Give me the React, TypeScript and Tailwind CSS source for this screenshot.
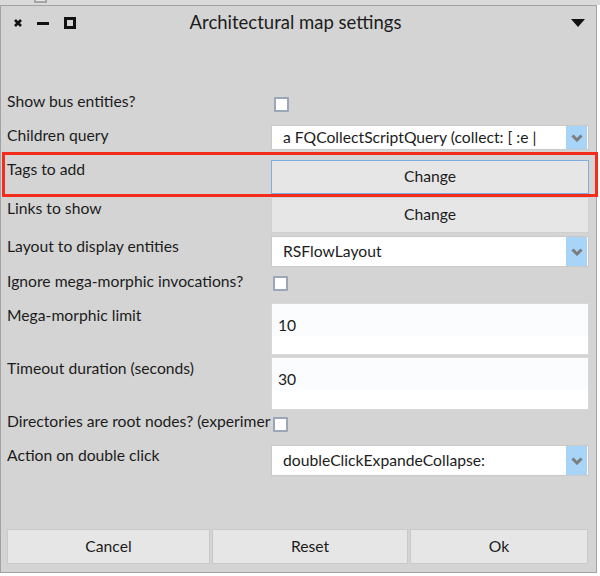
import React from 'react';

const FONT = { fontFamily: 'Lato, "Open Sans", sans-serif' };

function Chevron() {
  return (
    <svg width="12" height="8" viewBox="0 0 12 8">
      <polyline points="1.5,1.5 6,6 10.5,1.5" fill="none" stroke="#7d7d7d" strokeWidth="3" strokeLinejoin="miter" />
    </svg>
  );
}

function Dropdown({ text, h }: { text: string; h: string }) {
  return (
    <div className={`flex w-[318px] border border-[#c9c9c9] bg-white ${h}`}>
      <div className="flex-1 flex items-center pl-[11px] overflow-hidden whitespace-nowrap text-[15.7px] text-[#1c1c1c]">{text}</div>
      <div className="w-[21px] bg-[#a8d4f8] flex items-center justify-center">
        <Chevron />
      </div>
      <div className="w-[1px]" />
    </div>
  );
}

function Checkbox() {
  return <div className="w-[15px] h-[15px] border-2 border-[#9ba7b8] bg-white rounded-[1px]" />;
}

function ChangeButton({ h, focused }: { h: string; focused?: boolean }) {
  return (
    <div
      className={`w-[318px] ${h} flex items-center justify-center bg-[#e6e6e6] border text-[15.7px] text-[#1c1c1c] ${
        focused ? 'border-[#7eaee0]' : 'border-[#d0d0d0]'
      }`}
    >
      Change
    </div>
  );
}

function NumberBox({ value, h }: { value: string; h: string }) {
  return (
    <div className={`w-[318px] ${h} bg-white border border-[#d8d8d8] flex flex-col`}>
      <div className="h-[32px] bg-[#fafcfe] pl-[6px] pt-[11px] text-[15.7px] leading-[20px] text-[#1c1c1c]">{value}</div>
    </div>
  );
}

type Row = {
  label: string;
  h: string;
  labelPad: string;
  ctrlPad: string;
  ctrl: React.ReactNode;
  marked?: boolean;
};

const ROWS: Row[] = [
  { label: 'Show bus entities?', h: 'h-[34px]', labelPad: 'pt-[1px]', ctrlPad: 'pt-[7px] pl-[3px]', ctrl: <Checkbox /> },
  {
    label: 'Children query',
    h: 'h-[34px]',
    labelPad: 'pt-[1px]',
    ctrlPad: 'pt-[1px]',
    ctrl: <Dropdown text="a FQCollectScriptQuery (collect: [ :e |" h="h-[25px]" />,
  },
  {
    label: 'Tags to add',
    h: 'h-[38px]',
    labelPad: 'pt-[1px]',
    ctrlPad: 'pt-[2px]',
    ctrl: <ChangeButton h="h-[34px]" focused />,
    marked: true,
  },
  { label: 'Links to show', h: 'h-[39px]', labelPad: 'pt-[2px]', ctrlPad: 'pt-[1px]', ctrl: <ChangeButton h="h-[36px]" /> },
  {
    label: 'Layout to display entities',
    h: 'h-[34px]',
    labelPad: 'pt-[1px]',
    ctrlPad: 'pt-[1px]',
    ctrl: <Dropdown text="RSFlowLayout" h="h-[31px]" />,
  },
  { label: 'Ignore mega-morphic invocations?', h: 'h-[33px]', labelPad: 'pt-[2px]', ctrlPad: 'pt-[7px] pl-[2px]', ctrl: <Checkbox /> },
  { label: 'Mega-morphic limit', h: 'h-[54px]', labelPad: 'pt-[3px]', ctrlPad: 'pt-[1px]', ctrl: <NumberBox value="10" h="h-[52px]" /> },
  { label: 'Timeout duration (seconds)', h: 'h-[54px]', labelPad: 'pt-[2px]', ctrlPad: 'pt-[1px]', ctrl: <NumberBox value="30" h="h-[53px]" /> },
  {
    label: 'Directories are root nodes? (experimer',
    h: 'h-[33px]',
    labelPad: 'pt-[1px]',
    ctrlPad: 'pt-[7px] pl-[2px]',
    ctrl: <Checkbox />,
  },
  {
    label: 'Action on double click',
    h: 'h-[37px]',
    labelPad: 'pt-[2px]',
    ctrlPad: 'pt-[2px]',
    ctrl: <Dropdown text="doubleClickExpandeCollapse:" h="h-[31px]" />,
  },
];

export default function App() {
  return (
    <div className="w-[600px] h-[576px] bg-white overflow-hidden" style={FONT}>
      {/* strip behind the window */}
      <div className="h-[5px] bg-[#dadada] relative">
        <div className="absolute left-[34px] -top-[3px] w-[13px] h-[6px] border-2 border-[#a5a5a5] bg-[#e8e8e8]" />
      </div>

      <div className="w-[597px] h-[568px] border border-[#a2a2a2] bg-[#d4d4d4] flex flex-col">
        {/* title bar */}
        <div className="h-[34px] flex items-center">
          <div className="flex items-center pl-[12px] gap-[14px]">
            <svg width="10" height="10" viewBox="0 0 10 10">
              <path d="M2 2 L8 8 M8 2 L2 8" stroke="#111" strokeWidth="2.6" />
            </svg>
            <div className="w-[12px] h-[3px] bg-[#111]" />
            <div className="w-[12px] h-[12px] border-[3px] border-[#111] ml-[1px]" />
          </div>
          <div className="flex-1 text-center text-[18.5px] text-[#1c1c1c] pr-[56px] whitespace-nowrap">Architectural map settings</div>
          <svg width="14" height="8" viewBox="0 0 14 8" className="mr-[11px]">
            <polygon points="0,0 14,0 7,8" fill="#111" />
          </svg>
        </div>

        <div className="h-[50px]" />

        {ROWS.map((r) => (
          <div key={r.label} className={`flex ${r.h} relative`}>
            <div className={`w-[270px] pl-[6px] ${r.labelPad} text-[15.7px] leading-[20px] text-[#1c1c1c] whitespace-nowrap`}>
              {r.label}
            </div>
            <div className={r.ctrlPad}>{r.ctrl}</div>
            {r.marked && (
              <div className="absolute left-[1px] -top-[6px] w-[596px] h-[45px] border-[3px] border-[#f42c1c] pointer-events-none" />
            )}
          </div>
        ))}

        <div className="flex-1" />

        <div className="flex gap-[2px] pl-[6px] pb-[8px] text-[15.7px] text-[#1c1c1c]">
          <div className="w-[203px] h-[35px] bg-[#e6e6e6] border border-[#c9c9c9] flex items-center justify-center">Cancel</div>
          <div className="w-[196px] h-[35px] bg-[#e6e6e6] border border-[#c9c9c9] flex items-center justify-center">Reset</div>
          <div className="w-[178px] h-[35px] bg-[#e6e6e6] border border-[#c9c9c9] flex items-center justify-center">Ok</div>
        </div>
      </div>
    </div>
  );
}
